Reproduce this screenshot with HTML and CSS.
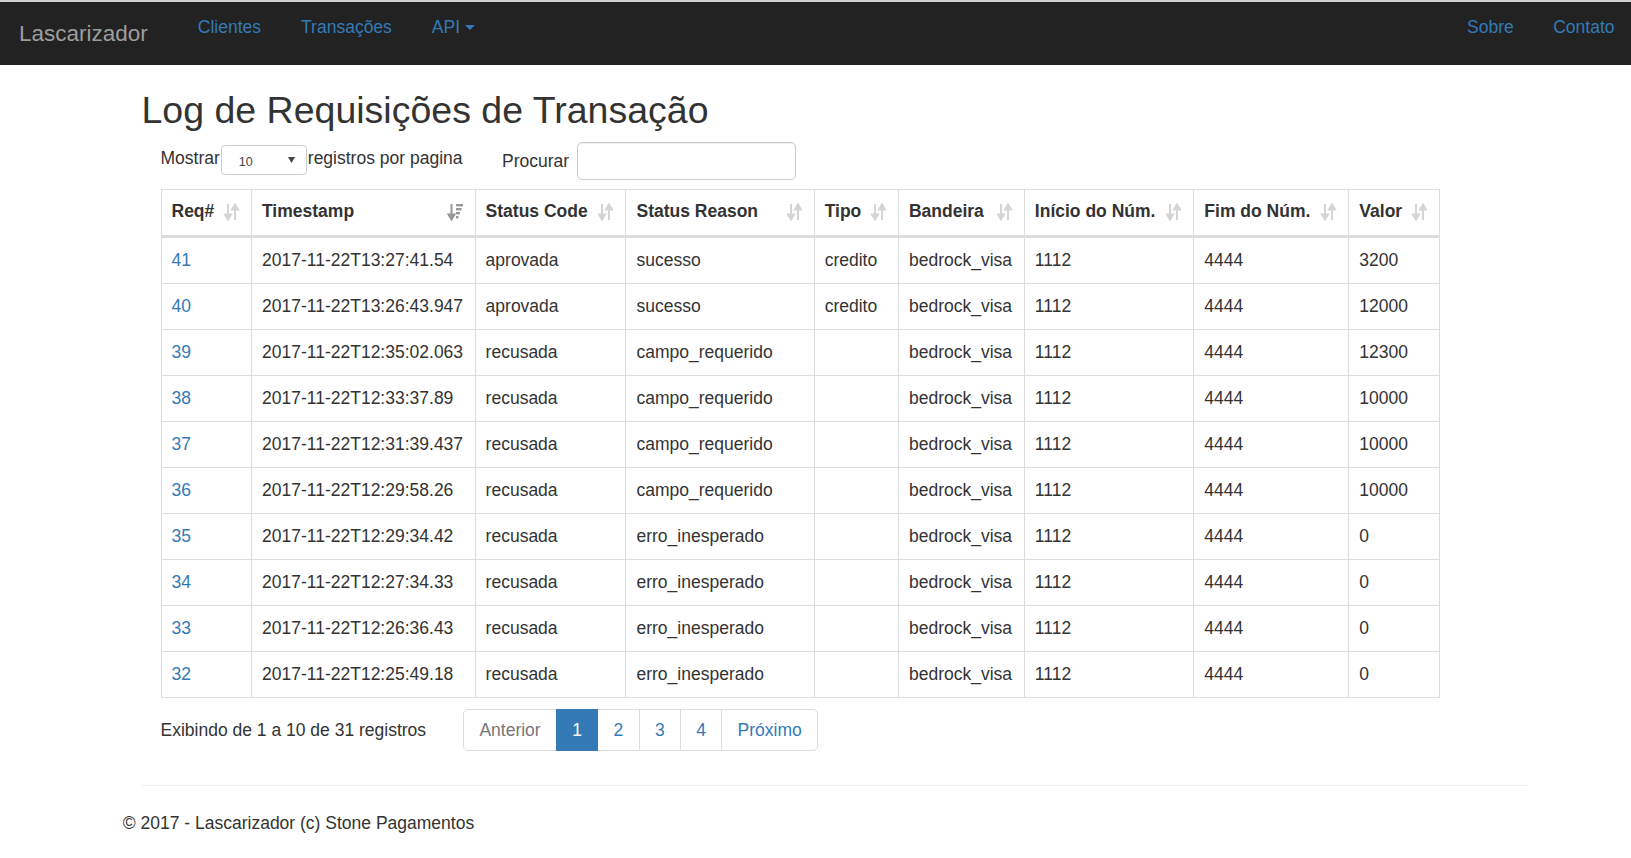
FILE: index.html
```html
<!DOCTYPE html>
<html lang="pt-BR">
<head>
<meta charset="utf-8">
<title>Log de Requisições de Transação</title>
<link rel="stylesheet" href="styles.css">
</head>
<body>
<nav class="navbar">
  <a class="brand" href="#">Lascarizador</a>
  <ul class="nav nav-left">
    <li><a href="#">Clientes</a></li>
    <li><a href="#">Transações</a></li>
    <li><a href="#">API<span class="caret"></span></a></li>
  </ul>
  <ul class="nav nav-right">
    <li><a href="#">Sobre</a></li>
    <li><a href="#">Contato</a></li>
  </ul>
</nav>

<div class="container">
  <h1 class="title">Log de Requisições de Transação</h1>

  <div class="controls">
    <div class="length">
      <span class="length-text">Mostrar</span>
      <div class="select"><span class="select-value">10</span><svg class="select-arrow" width="7" height="6" viewBox="0 0 7 6"><polygon points="0,0 7,0 3.5,6" fill="#444"/></svg></div>
      <span class="length-text">registros por pagina</span>
    </div>
    <div class="search">
      <span>Procurar</span>
      <input class="search-input" type="text">
    </div>
  </div>

  <table class="grid">
    <colgroup>
      <col class="c-req"><col class="c-ts"><col class="c-code"><col class="c-reason"><col class="c-tipo"><col class="c-band"><col class="c-ini"><col class="c-fim"><col class="c-valor">
    </colgroup>
    <thead>
      <tr>
        <th><div class="th-inner"><span>Req#</span><svg class="sort" width="18" height="18" viewBox="0 0 18 18"><path d="M5 1v12M2 11.5l3 5 3-5zM12 17V5M9 6.5l3-5 3 5z" fill="#333" stroke="#333" stroke-width="2"/></svg></div></th>
        <th><div class="th-inner"><span>Timestamp</span><svg class="sort sort-desc" width="18" height="18" viewBox="0 0 18 18"><path d="M4.5 1v12M1.5 11.5l3 5 3-5z" fill="#333" stroke="#333" stroke-width="2"/><rect x="9" y="1" width="7" height="2.4" fill="#333"/><rect x="9" y="5" width="5.5" height="2.4" fill="#333"/><rect x="9" y="9" width="4" height="2.4" fill="#333"/><rect x="9" y="13" width="2.5" height="2.4" fill="#333"/></svg></div></th>
        <th><div class="th-inner"><span>Status Code</span><svg class="sort" width="18" height="18" viewBox="0 0 18 18"><path d="M5 1v12M2 11.5l3 5 3-5zM12 17V5M9 6.5l3-5 3 5z" fill="#333" stroke="#333" stroke-width="2"/></svg></div></th>
        <th><div class="th-inner"><span>Status Reason</span><svg class="sort" width="18" height="18" viewBox="0 0 18 18"><path d="M5 1v12M2 11.5l3 5 3-5zM12 17V5M9 6.5l3-5 3 5z" fill="#333" stroke="#333" stroke-width="2"/></svg></div></th>
        <th><div class="th-inner"><span>Tipo</span><svg class="sort" width="18" height="18" viewBox="0 0 18 18"><path d="M5 1v12M2 11.5l3 5 3-5zM12 17V5M9 6.5l3-5 3 5z" fill="#333" stroke="#333" stroke-width="2"/></svg></div></th>
        <th><div class="th-inner"><span>Bandeira</span><svg class="sort" width="18" height="18" viewBox="0 0 18 18"><path d="M5 1v12M2 11.5l3 5 3-5zM12 17V5M9 6.5l3-5 3 5z" fill="#333" stroke="#333" stroke-width="2"/></svg></div></th>
        <th><div class="th-inner"><span>Início do Núm.</span><svg class="sort" width="18" height="18" viewBox="0 0 18 18"><path d="M5 1v12M2 11.5l3 5 3-5zM12 17V5M9 6.5l3-5 3 5z" fill="#333" stroke="#333" stroke-width="2"/></svg></div></th>
        <th><div class="th-inner"><span>Fim do Núm.</span><svg class="sort" width="18" height="18" viewBox="0 0 18 18"><path d="M5 1v12M2 11.5l3 5 3-5zM12 17V5M9 6.5l3-5 3 5z" fill="#333" stroke="#333" stroke-width="2"/></svg></div></th>
        <th><div class="th-inner"><span>Valor</span><svg class="sort" width="18" height="18" viewBox="0 0 18 18"><path d="M5 1v12M2 11.5l3 5 3-5zM12 17V5M9 6.5l3-5 3 5z" fill="#333" stroke="#333" stroke-width="2"/></svg></div></th>
      </tr>
    </thead>
    <tbody>
      <tr><td><a href="#">41</a></td><td>2017-11-22T13:27:41.54</td><td>aprovada</td><td>sucesso</td><td>credito</td><td>bedrock_visa</td><td>1112</td><td>4444</td><td>3200</td></tr>
      <tr><td><a href="#">40</a></td><td>2017-11-22T13:26:43.947</td><td>aprovada</td><td>sucesso</td><td>credito</td><td>bedrock_visa</td><td>1112</td><td>4444</td><td>12000</td></tr>
      <tr><td><a href="#">39</a></td><td>2017-11-22T12:35:02.063</td><td>recusada</td><td>campo_requerido</td><td></td><td>bedrock_visa</td><td>1112</td><td>4444</td><td>12300</td></tr>
      <tr><td><a href="#">38</a></td><td>2017-11-22T12:33:37.89</td><td>recusada</td><td>campo_requerido</td><td></td><td>bedrock_visa</td><td>1112</td><td>4444</td><td>10000</td></tr>
      <tr><td><a href="#">37</a></td><td>2017-11-22T12:31:39.437</td><td>recusada</td><td>campo_requerido</td><td></td><td>bedrock_visa</td><td>1112</td><td>4444</td><td>10000</td></tr>
      <tr><td><a href="#">36</a></td><td>2017-11-22T12:29:58.26</td><td>recusada</td><td>campo_requerido</td><td></td><td>bedrock_visa</td><td>1112</td><td>4444</td><td>10000</td></tr>
      <tr><td><a href="#">35</a></td><td>2017-11-22T12:29:34.42</td><td>recusada</td><td>erro_inesperado</td><td></td><td>bedrock_visa</td><td>1112</td><td>4444</td><td>0</td></tr>
      <tr><td><a href="#">34</a></td><td>2017-11-22T12:27:34.33</td><td>recusada</td><td>erro_inesperado</td><td></td><td>bedrock_visa</td><td>1112</td><td>4444</td><td>0</td></tr>
      <tr><td><a href="#">33</a></td><td>2017-11-22T12:26:36.43</td><td>recusada</td><td>erro_inesperado</td><td></td><td>bedrock_visa</td><td>1112</td><td>4444</td><td>0</td></tr>
      <tr><td><a href="#">32</a></td><td>2017-11-22T12:25:49.18</td><td>recusada</td><td>erro_inesperado</td><td></td><td>bedrock_visa</td><td>1112</td><td>4444</td><td>0</td></tr>
    </tbody>
  </table>

  <div class="table-footer">
    <div class="info">Exibindo de 1 a 10 de 31 registros</div>
    <ul class="pagination">
      <li class="disabled"><a href="#">Anterior</a></li>
      <li class="active"><a href="#">1</a></li>
      <li><a href="#">2</a></li>
      <li><a href="#">3</a></li>
      <li><a href="#">4</a></li>
      <li><a href="#">Próximo</a></li>
    </ul>
  </div>

  <hr class="divider">
  <footer class="footer">
    <p>© 2017 - Lascarizador (c) Stone Pagamentos</p>
  </footer>
</div>
</body>
</html>
```

FILE: styles.css
```css
* {
  box-sizing: border-box;
}

html, body {
  margin: 0;
  padding: 0;
  background: #fff;
}

body {
  font-family: "Liberation Sans", Arial, Helvetica, sans-serif;
  font-size: 17.5px;
  line-height: 25px;
  color: #333;
  overflow: hidden;
}

a {
  color: #337ab7;
  text-decoration: none;
}

/* ---------- navbar ---------- */
.navbar {
  display: flex;
  align-items: flex-start;
  height: 65px;
  background: #222;
  border-top: 2px solid #cfcfcf;
}

.brand {
  margin: 18.5px 0 0 19px;
  font-size: 22.5px;
  line-height: 25px;
  color: #9d9d9d;
}

.nav {
  display: flex;
  list-style: none;
  margin: 12.5px 0 0;
  padding: 0;
}

.nav-left {
  margin-left: 50px;
  gap: 40px;
}

.nav-right {
  margin-left: auto;
  margin-right: 16.5px;
  gap: 39.5px;
}

.nav a {
  display: block;
  line-height: 25px;
  color: #337ab7;
}

.caret {
  display: inline-block;
  width: 0;
  height: 0;
  margin-left: 5px;
  vertical-align: middle;
  border-top: 5px solid #337ab7;
  border-left: 5px solid transparent;
  border-right: 5px solid transparent;
}

/* ---------- content ---------- */
.container {
  width: 1387px;
  margin-left: 141.5px;
}

.title {
  margin: 25px 0 0;
  font-size: 37.5px;
  line-height: 41.25px;
  font-weight: normal;
  color: #333;
}

.controls {
  display: flex;
  align-items: flex-start;
  height: 38.5px;
  margin: 10.5px 0 0 19px;
}

.length {
  display: flex;
  align-items: flex-start;
  margin-top: 3px;
}

.length-text {
  margin-top: 1px;
}

.select {
  display: flex;
  align-items: center;
  justify-content: space-between;
  width: 86px;
  height: 30px;
  margin: 0.5px 1px 0;
  padding: 0 11px 0 17px;
  border: 1px solid #ccc;
  border-radius: 4px;
  background: #fff;
}

.select-value {
  margin-top: 5px;
  font-size: 12.5px;
  line-height: 23px;
  color: #444;
}

.select-arrow {
  display: block;
}

.search {
  display: flex;
  align-items: center;
  gap: 8px;
  margin-left: 39.5px;
}

.search-input {
  width: 219px;
  height: 38.5px;
  border: 1px solid #ccc;
  border-radius: 5px;
  box-shadow: inset 0 1px 1px rgba(0, 0, 0, 0.075);
  font: inherit;
  padding: 0 10px;
}

/* ---------- table ---------- */
.grid {
  margin: 9px 0 0 19px;
  width: 1278.4px;
  border-collapse: collapse;
  table-layout: fixed;
}

.c-req { width: 90.5px; }
.c-ts { width: 223.6px; }
.c-code { width: 150.9px; }
.c-reason { width: 188.2px; }
.c-tipo { width: 84.3px; }
.c-band { width: 125.9px; }
.c-ini { width: 169.5px; }
.c-fim { width: 155px; }
.c-valor { width: 90.5px; }

.grid th,
.grid td {
  border: 1px solid #ddd;
  padding: 10px;
  line-height: 25px;
  text-align: left;
  white-space: nowrap;
}

.grid td {
  padding-right: 4px;
}

.grid th {
  padding-top: 9px;
  padding-bottom: 11px;
  border-bottom: 3px solid #ddd;
  vertical-align: bottom;
  font-weight: bold;
}

.th-inner {
  display: flex;
  align-items: center;
  justify-content: space-between;
}

.sort {
  display: block;
  flex: none;
  opacity: 0.2;
}

.sort-desc {
  opacity: 0.5;
}

/* ---------- table footer ---------- */
.table-footer {
  display: flex;
  align-items: center;
  margin: 11px 0 0 19px;
}

.pagination {
  display: flex;
  list-style: none;
  margin: 0 0 0 37px;
  padding: 0;
}

.pagination a {
  display: block;
  padding: 7.5px 15.3px;
  line-height: 25px;
  border: 1px solid #ddd;
  margin-left: -1px;
  color: #337ab7;
  background: #fff;
}

.pagination li:first-child a {
  margin-left: 0;
  border-radius: 5px 0 0 5px;
}

.pagination li:last-child a {
  border-radius: 0 5px 5px 0;
}

.pagination .disabled a {
  color: #777;
}

.pagination .active a {
  position: relative;
  z-index: 2;
  background: #337ab7;
  border-color: #337ab7;
  color: #fff;
}

/* ---------- footer ---------- */
.divider {
  margin: 34px 0 0;
  height: 0;
  border: 0;
  border-top: 1px solid #eee;
}

.footer p {
  margin: 25px 0 0 -18.75px;
}
```
